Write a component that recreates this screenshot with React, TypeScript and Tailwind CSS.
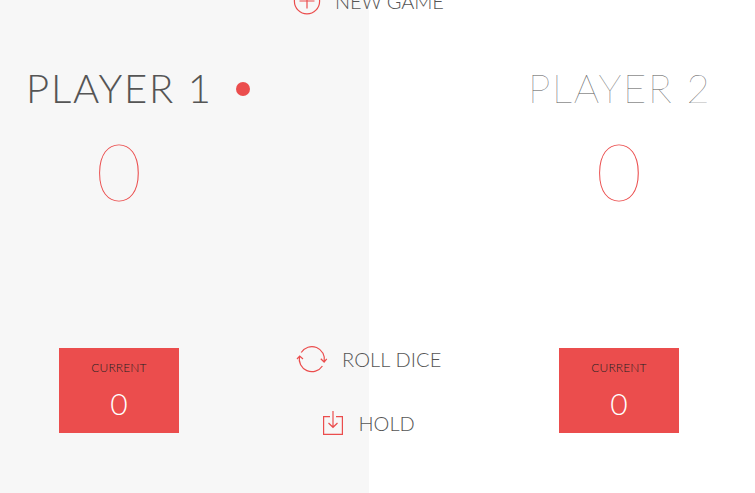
import React from 'react';

function Player({ name, active }: { name: string; active?: boolean }) {
  return (
    <section className="flex w-[180px] flex-col items-center">
      <div className={`mt-[64px] flex h-12 w-[186px] items-center whitespace-nowrap text-[40px] text-[#555] ${active ? 'tracking-[1.8px] font-light' : 'pl-[2px] tracking-[1.7px] font-thin'}`}>
        {name}
        {active && <span className="ml-[23px] mt-[2px] size-[14px] shrink-0 rounded-full bg-[#eb4d4d]" />}
      </div>
      <div className="mt-[10px] h-[96px] text-[80px] leading-[96px] font-thin text-[#eb4d4d]">0</div>
      <div className="mt-[130px] flex h-[85px] w-[120px] flex-col items-center bg-[#eb4d4d]">
        <div className="mt-[12px] text-[12px] leading-[16px] tracking-[0.13px] font-light text-[#222]">CURRENT</div>
        <div className="mt-[9px] text-[30px] leading-[36px] font-light text-white">0</div>
      </div>
    </section>
  );
}

const button = 'absolute flex items-center whitespace-nowrap text-[20px] font-light text-[#555]';

export default function App() {
  return (
    <main className="relative flex h-[493px] w-[755px] overflow-hidden bg-white font-['Lato',sans-serif]">
      <div className="w-[369px] bg-[#f7f7f7] pl-[29px]"><Player name="PLAYER 1" active /></div>
      <div className="pl-[160px]"><Player name="PLAYER 2" /></div>
      <button className={`${button} left-[293px] top-[-14px] h-8 gap-[14px]`}>
        <svg className="h-7 w-7" viewBox="0 0 28 28" fill="none" stroke="#eb4d4d" strokeWidth="1.2">
          <circle cx="14" cy="13.2" r="12.6" />
          <path d="M14 5.5V20.5M6.5 13H21.5" />
        </svg>
        <span className="-mt-[2px] tracking-[-0.1px]">NEW GAME</span>
      </button>
      <button className={`${button} left-[296px] top-[344px] h-8 gap-[14px]`}>
        <svg className="h-8 w-8" viewBox="0 0 32 32" fill="none" stroke="#eb4d4d" strokeWidth="1.2">
          <path d="M5.2 8.5A12.6 12.6 0 0 1 28.2 17.8M24.8 14.8L28.1 18L30.8 14.8M1 15L3.7 12L7 15M3.6 12.2A12.6 12.6 0 0 0 26.4 22" />
        </svg>
        <span className="-mt-[2px] tracking-[0.1px]">ROLL DICE</span>
      </button>
      <button className={`${button} left-[322px] top-[408px] h-8 gap-[14.5px]`}>
        <svg className="h-8 w-[22px]" viewBox="0 0 22 32" fill="none" stroke="#eb4d4d" strokeWidth="1.2">
          <path d="M8 8.6H1.6V26.4H20.4V8.6H14M11 3V19.2M6.5 15L11 19.3L15.5 15" />
        </svg>
        <span className="-mt-[2px]">HOLD</span>
      </button>
    </main>
  );
}
